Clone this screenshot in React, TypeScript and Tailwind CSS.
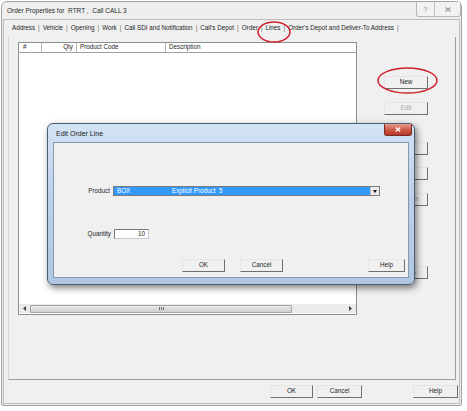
import React from 'react';

const tabs = [
  'Address',
  'Vehicle',
  'Opening',
  'Work',
  'Call SDI and Notification',
  "Call's Depot",
  'Order',
  'Lines',
  "Order's Depot and Deliver-To Address",
];

function WinButton({
  label,
  width,
  disabled = false,
  className = '',
}: {
  label: string;
  width: string;
  disabled?: boolean;
  className?: string;
}) {
  return (
    <div
      className={`${width} h-[13px] shrink-0 flex items-center justify-center bg-[#f0f0f0] border border-t-[#e6e6e6] border-l-[#e6e6e6] border-r-[#6f6f6f] border-b-[#6f6f6f] text-[6.3px] leading-none ${
        disabled ? 'text-[#a8a8a8]' : 'text-[#1e1e1e]'
      } ${className}`}
    >
      {label}
    </div>
  );
}

function ScrollArrow({ dir }: { dir: 'left' | 'right' }) {
  return (
    <div className="w-[11px] h-full flex items-center justify-center">
      <svg width="3" height="5" viewBox="0 0 3 5">
        {dir === 'left' ? (
          <path d="M3 0 L0 2.5 L3 5 Z" fill="#404040" />
        ) : (
          <path d="M0 0 L3 2.5 L0 5 Z" fill="#404040" />
        )}
      </svg>
    </div>
  );
}

export default function App() {
  return (
    <div className="relative w-[467px] h-[411px] bg-white overflow-hidden pl-[1px] pt-[1px] font-['Liberation_Sans',Arial,sans-serif] text-[#1e1e1e]">
      {/* Main window */}
      <div className="w-[461px] h-[405px] border border-[#a3a3a3] rounded-t-[6px] rounded-b-[2px] bg-[#eeeeee] flex flex-col">
        {/* Title bar */}
        <div className="h-[17px] flex items-start justify-between">
          <div className="pl-[5px] pt-[6px] text-[6.5px] leading-none text-[#2a2a2a]">
            Order Properties for&nbsp; RTRT ,&nbsp; Call CALL 3
          </div>
          <div className="flex h-[15px] border border-t-0 border-[#b8b8b8] rounded-b-[3px] bg-[#f2f2f2]">
            <div className="w-[17px] flex items-center justify-center text-[7px] text-[#8a8a8a] leading-none">?</div>
            <div className="w-[26px] border-l border-[#c4c4c4] flex items-center justify-center">
              <svg width="6" height="5" viewBox="0 0 6 5">
                <path d="M0.5 0.5 L5.5 4.5 M5.5 0.5 L0.5 4.5" stroke="#9a9a9a" strokeWidth="1.1" />
              </svg>
            </div>
          </div>
        </div>

        {/* Client area */}
        <div className="flex-1 mx-[1px] mb-[1px] border border-[#bdbdbd] bg-[#f0f0f0] flex flex-col">
          {/* Tab strip */}
          <div className="h-[17px] pl-[8px] flex items-center text-[6.3px] leading-none whitespace-nowrap">
            {tabs.map((t) => (
              <React.Fragment key={t}>
                <span className={t === 'Lines' ? 'px-[0px]' : ''}>{t}</span>
                <span className="mx-[3px] text-[#6a6a6a]">|</span>
              </React.Fragment>
            ))}
          </div>

          {/* Tab panel */}
          <div className="flex-1 ml-[4px] mr-[3px] border-l border-l-[#d4d4d4] border-r border-r-[#9d9d9d] border-b border-b-[#9d9d9d] flex">
            {/* List view */}
            <div className="pl-[9px] pt-[5px]">
              <div className="w-[339px] h-[273px] border border-[#8e8f8f] bg-white flex flex-col">
                <div className="h-[10px] flex border-b border-[#a0a0a0] text-[6.3px] leading-none">
                  <div className="w-[23px] border-r border-[#b8b8b8] pl-[4px] flex items-center">#</div>
                  <div className="w-[35px] border-r border-[#b8b8b8] pr-[3px] flex items-center justify-end">Qty</div>
                  <div className="w-[89px] border-r border-[#b8b8b8] pl-[3px] flex items-center">Product Code</div>
                  <div className="flex-1 pl-[3px] flex items-center">Description</div>
                </div>
                <div className="flex-1" />
                <div className="h-[9px] mb-[1px] flex items-center bg-[#ebebeb]">
                  <ScrollArrow dir="left" />
                  <div className="w-[262px] h-[8px] rounded-[1px] border border-[#a5a5a5] bg-gradient-to-b from-[#e9e9e9] to-[#cfcfcf] flex items-center justify-center">
                    <div className="flex gap-[1px]">
                      <div className="w-[1px] h-[3px] bg-[#707070]" />
                      <div className="w-[1px] h-[3px] bg-[#707070]" />
                      <div className="w-[1px] h-[3px] bg-[#707070]" />
                    </div>
                  </div>
                  <div className="flex-1" />
                  <ScrollArrow dir="right" />
                </div>
              </div>
            </div>

            {/* Side buttons */}
            <div className="ml-[27px] flex flex-col">
              <WinButton label="New" width="w-[44px]" className="mt-[39px]" />
              <WinButton label="Edit" width="w-[44px]" disabled className="mt-[13px]" />
              <WinButton label="Delete" width="w-[44px]" className="mt-[27px]" />
              <WinButton label="Copy" width="w-[44px]" className="mt-[12px]" />
              <WinButton label="Split Item" width="w-[44px]" disabled className="mt-[13px]" />
              <WinButton label="Details" width="w-[44px]" className="mt-[60px]" />
            </div>
          </div>

          {/* Bottom buttons */}
          <div className="h-[23px] pt-[5px] flex items-start">
            <WinButton label="OK" width="w-[43px]" className="ml-[266px]" />
            <WinButton label="Cancel" width="w-[45px]" className="ml-[4px]" />
            <WinButton label="Help" width="w-[45px]" className="ml-[51px]" />
          </div>
        </div>
      </div>

      {/* Edit Order Line dialog */}
      <div className="absolute left-[47px] top-[123px] w-[368px] h-[162px] rounded-[6px] border border-[#4b5e74] bg-gradient-to-b from-[#d3e3f5] via-[#bccfe8] to-[#b1c6e2] shadow-[2px_3px_7px_rgba(0,0,0,0.5)] flex flex-col">
        <div className="relative h-[18px] pl-[8px] flex items-center text-[7px] leading-none text-[#1c1c1c]">
          Edit Order Line
          <div className="absolute right-[2px] top-0 w-[28px] h-[12px] rounded-b-[3px] border border-t-0 border-[#7a2a22] bg-gradient-to-b from-[#e79a8c] via-[#cf5a48] to-[#b83a2a] flex items-center justify-center">
            <svg width="6" height="5" viewBox="0 0 6 5">
              <path d="M0.7 0.5 L5.3 4.5 M5.3 0.5 L0.7 4.5" stroke="#ffffff" strokeWidth="1.3" />
            </svg>
          </div>
        </div>
        <div className="flex-1 mx-[5px] mb-[6px] border border-[#8498b0] bg-[#f0f0f0] flex flex-col text-[6.3px] leading-none">
          {/* Product row */}
          <div className="mt-[43px] flex items-center">
            <div className="w-[56px] text-right">Product</div>
            <div className="ml-[3px] w-[267px] h-[10px] border border-[#7a7a7a] bg-white flex">
              <div className="flex-1 bg-[#3399ff] text-white flex items-center">
                <span className="pl-[3px] w-[58px]">BOX</span>
                <span>Explicit Product&nbsp; 5</span>
              </div>
              <div className="w-[9px] bg-[#ececec] border-l border-[#c0c0c0] flex items-center justify-center">
                <svg width="4" height="3" viewBox="0 0 4 3">
                  <path d="M0 0 L4 0 L2 3 Z" fill="#111111" />
                </svg>
              </div>
            </div>
          </div>

          {/* Quantity row */}
          <div className="mt-[33px] flex items-center">
            <div className="w-[57px] text-right">Quantity</div>
            <div className="ml-[3px] w-[35px] h-[10px] border border-[#7a7a7a] border-b-[#c8c8c8] border-r-[#c8c8c8] bg-white flex items-center justify-end pr-[3px]">
              10
            </div>
          </div>

          {/* Dialog buttons */}
          <div className="mt-[20px] flex">
            <WinButton label="OK" width="w-[43px]" className="ml-[128px]" />
            <WinButton label="Cancel" width="w-[43px]" className="ml-[15px]" />
            <WinButton label="Help" width="w-[37px]" className="ml-[85px]" />
          </div>
        </div>
      </div>

      {/* Red annotation ellipses */}
      <svg className="absolute left-0 top-0 pointer-events-none" width="467" height="411">
        <ellipse cx="274" cy="32" rx="16" ry="10" fill="none" stroke="#cf1f2b" strokeWidth="1.5" />
        <ellipse cx="407.5" cy="80.5" rx="29.5" ry="12.5" fill="none" stroke="#cf1f2b" strokeWidth="1.5" />
      </svg>
    </div>
  );
}
